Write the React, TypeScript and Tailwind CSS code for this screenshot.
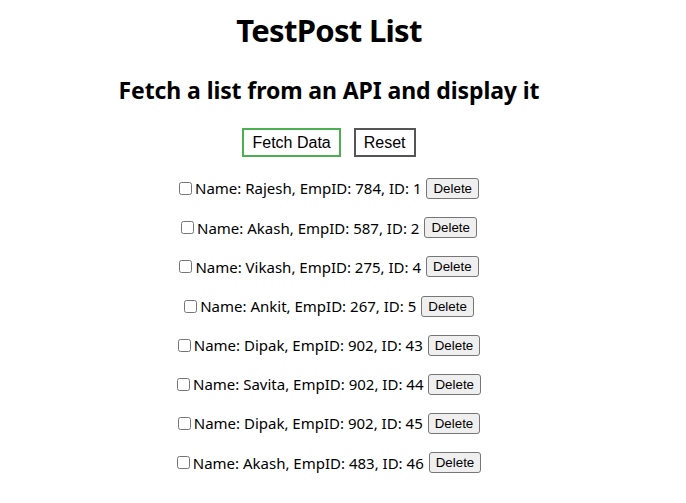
const employees = [
  { name: "Rajesh", empId: 784, id: 1 },
  { name: "Akash", empId: 587, id: 2 },
  { name: "Vikash", empId: 275, id: 4 },
  { name: "Ankit", empId: 267, id: 5 },
  { name: "Dipak", empId: 902, id: 43 },
  { name: "Savita", empId: 902, id: 44 },
  { name: "Dipak", empId: 902, id: 45 },
  { name: "Akash", empId: 483, id: 46 },
];

export default function App() {
  return (
    <div className="w-[658px] bg-white text-black font-['Noto_Sans',sans-serif] text-center">
      <h1 className="pt-[10px] text-[31px] leading-[40px] font-bold tracking-[-0.7px]">TestPost List</h1>
      <h2 className="mt-[24px] text-[23px] leading-[32px] font-bold tracking-[-0.1px]">Fetch a list from an API and display it</h2>

      <div className="mt-[22px] flex justify-center gap-[13px] font-['Liberation_Sans',Arial,sans-serif]">
        <button className="h-[29px] px-[8px] border-2 border-[#4caf50] bg-white text-[16px]">Fetch Data</button>
        <button className="h-[29px] px-[8px] border-2 border-[#555555] bg-white text-[16px]">Reset</button>
      </div>

      {/* List */}
      <ul className="mt-[12px]">
        {employees.map((emp) => (
          <li key={emp.id} className="h-[39.2px] flex items-center justify-center text-[15px]">
            <input type="checkbox" className="w-[13px] h-[13px] mr-[3px]" />
            <span>
              Name: {emp.name}, EmpID: {emp.empId}, ID: {emp.id}
            </span>
            <button className="ml-[5px] h-[21px] px-[6px] border border-[#767676] rounded-[3px] bg-[#efefef] text-[13.33px] font-['Liberation_Sans',Arial,sans-serif]">
              Delete
            </button>
          </li>
        ))}
      </ul>
    </div>
  );
}
